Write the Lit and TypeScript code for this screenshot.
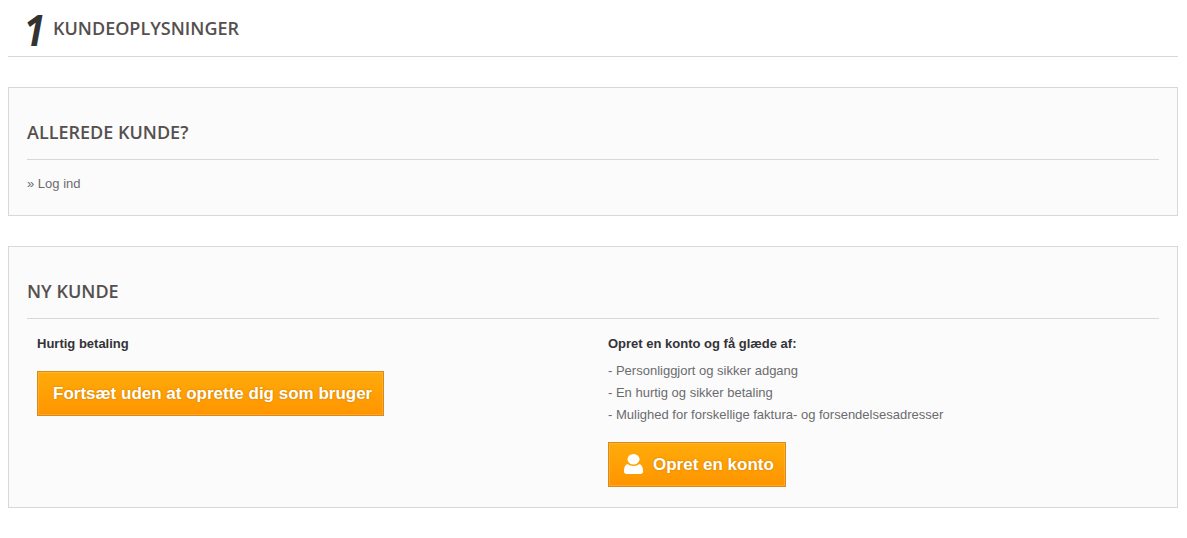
import { LitElement, html, css } from "lit";
import { customElement } from "lit/decorators.js";

@customElement("app-root")
export class AppRoot extends LitElement {
  static styles = css`
    :host { display: block; height: 538px; padding: 0 9px 0 8px; box-sizing: border-box; font-family: "Liberation Sans", Arial, sans-serif; font-size: 13px; color: #6b6b6f; background: #fff; }
    .head { height: 56px; border-bottom: 1px solid #d8d8d8; display: flex; align-items: center; padding-left: 16px; box-sizing: content-box; }
    .num { font-family: "Open Sans", sans-serif; font-style: italic; font-weight: 700; font-size: 43px; line-height: 56px; color: #333; width: 29px; position: relative; top: 2px; transform: scaleX(.88); transform-origin: 0 50%; }
    .h1 { font-family: "Open Sans", sans-serif; font-weight: 600; font-size: 18px; color: #55504f; line-height: 56px; }
    .panel { background: #fbfbfb; border: 1px solid #d8d8d8; padding: 0 18px; margin-top: 30px; }
    .panel.first { height: 127px; }
    .panel.second { height: 260px; }
    .title { font-family: "Open Sans", sans-serif; font-weight: 600; font-size: 18px; color: #55504f; height: 71px; line-height: 89px; border-bottom: 1px solid #d8d8d8; }
    .login { margin-top: 15px; line-height: 17px; }
    .cols { display: grid; grid-template-columns: 571px 1fr; padding: 16px 0 0 10px; }
    .b { font-weight: 700; color: #333338; line-height: 18px; font-size: 13px; }
    .btn { display: flex; align-items: center; box-sizing: border-box; background: linear-gradient(#ffab0a, #ff9500); border: 1px solid #d98a1e; box-shadow: inset 0 0 0 1px rgba(255,200,100,.35); color: #fff; font-weight: 700; text-shadow: 0 0 2px rgba(170,100,0,.7); font-size: 17px; height: 45px; }
    .b1 { width: 347px; margin-top: 18px; padding-left: 15px; }
    .b2 { width: 178px; margin-top: 16px; padding-left: 15px; gap: 10px; }
    ul { list-style: none; margin: 7px 0 0; padding: 0; }
    li { line-height: 22px; font-size: 13px; }
    svg { width: 19px; height: 20px; fill: #fff; display: block; margin-top: -2px; }
  `;
  render() {
    return html`
      <div class="head"><span class="num">1</span><span class="h1">KUNDEOPLYSNINGER</span></div>
      <section class="panel first">
        <div class="title">ALLEREDE KUNDE?</div>
        <div class="login">» Log ind</div>
      </section>
      <section class="panel second">
        <div class="title">NY KUNDE</div>
        <div class="cols">
          <div>
            <div class="b">Hurtig betaling</div>
            <div class="btn b1">Fortsæt uden at oprette dig som bruger</div>
          </div>
          <div>
            <div class="b">Opret en konto og få glæde af:</div>
            <ul>
              <li>- Personliggjort og sikker adgang</li>
              <li>- En hurtig og sikker betaling</li>
              <li>- Mulighed for forskellige faktura- og forsendelsesadresser</li>
            </ul>
            <div class="btn b2">
              <svg viewBox="0 0 19 20"><ellipse cx="9.500" cy="5.300" rx="6" ry="5.300"/><path d="M2.500 20C1 20 0 19 0 17.500c0-3 .6-6.500 3.500-7.500 1.400 1.200 3.500 2 6 2s4.600-.8 6-2c2.900 1 3.500 4.500 3.500 7.500 0 1.500-1 2.500-2.500 2.500z"/></svg>
              Opret en konto
            </div>
          </div>
        </div>
      </section>
    `;
  }
}
